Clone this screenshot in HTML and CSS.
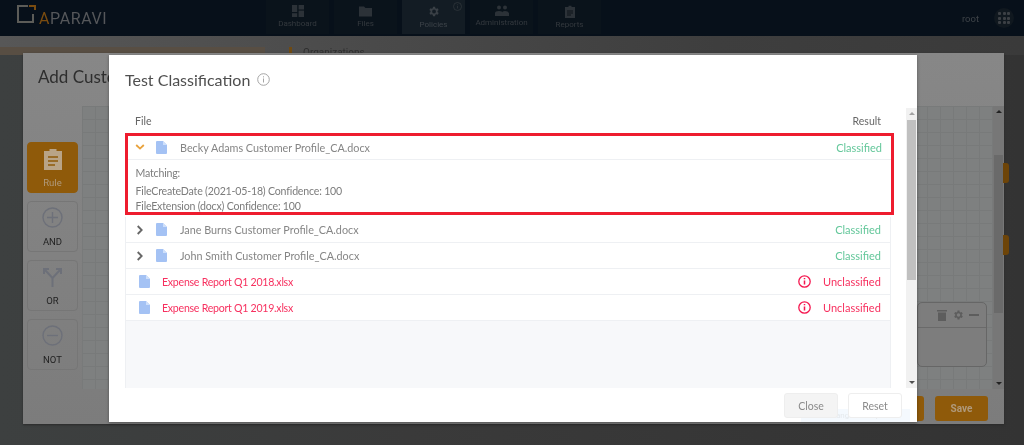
FILE: index.html
```html
<!DOCTYPE html>
<html lang="en">
<head>
<meta charset="utf-8">
<title>Test Classification</title>
<link rel="stylesheet" href="styles.css">
</head>
<body>
<div class="page">
  <header class="topbar">
    <div class="logo">
      <svg class="logo-mark" width="19" height="19" viewBox="0 0 19 19"><path d="M11 1H1v16h15V9" fill="none" stroke="#5c5c58" stroke-width="2"/><path d="M12 1h6v4" fill="none" stroke="#7a4c10" stroke-width="2"/></svg>
      <span class="logo-word"><span class="logo-a">A</span>PARAVI</span>
    </div>
    <nav class="nav">
      <div class="nav-item"><svg width="12" height="12" viewBox="0 0 12 12" fill="#2c3238"><rect width="5.2" height="7"/><rect x="6.6" width="5.4" height="4.5"/><rect y="8.2" width="5.2" height="3.8"/><rect x="6.6" y="5.6" width="5.4" height="6.4"/></svg><span>Dashboard</span></div>
      <div class="nav-item"><svg width="13" height="12" viewBox="0 0 13 12" fill="#2c3238"><path d="M0 1.5h5l1.5 1.5H13v8.500H0z"/></svg><span>Files</span></div>
      <div class="nav-item nav-active"><svg width="13" height="13" viewBox="0 0 24 24" fill="#3a4046"><path d="M19.400 13a7.500 7.500 0 0 0 0-2l2.100-1.600-2-3.500-2.500 1a7.500 7.500 0 0 0-1.700-1L15 3.200h-4l-.4 2.700a7.500 7.500 0 0 0-1.700 1l-2.500-1-2 3.500L6.500 11a7.500 7.500 0 0 0 0 2l-2.100 1.600 2 3.500 2.500-1a7.500 7.500 0 0 0 1.700 1l.4 2.700h4l.4-2.700a7.500 7.500 0 0 0 1.700-1l2.500 1 2-3.500zM13 15.500a3.500 3.500 0 1 1 0-7 3.500 3.500 0 0 1 0 7z"/></svg><span>Policies</span>
        <svg class="nav-info" width="9" height="9" viewBox="0 0 9 9"><circle cx="4.500" cy="4.500" r="4" fill="none" stroke="#30363b" stroke-width=".8"/><path d="M4.500 4v2.500M4.500 2.400v.8" stroke="#30363b" stroke-width=".8"/></svg></div>
      <div class="nav-item"><svg width="14" height="11" viewBox="0 0 14 11" fill="#2c3238"><circle cx="4" cy="2.500" r="2"/><circle cx="10" cy="2.500" r="2"/><path d="M0 11V8q0-2 4-2t3 2q0-2 3-2t4 2v3z"/></svg><span>Administration</span></div>
      <div class="nav-item"><svg width="12" height="13" viewBox="0 0 12 13"><path d="M1 2h3.500V.8h3V2H11v11H1z" fill="#2c3238"/><path d="M3 6h6M3 8h6M3 10h4" stroke="#0c1319"/></svg><span>Reports</span></div>
    </nav>
    <div class="user">
      <span>root</span>
      <div class="apps"><i></i><i></i><i></i><i></i><i></i><i></i><i></i><i></i><i></i></div>
    </div>
  </header>

  <div class="strip">
    <div class="strip-row"></div>
    <div class="org"><span class="pin"></span><span>Organizations</span></div>
  </div>

  <section class="back">
    <h2 class="back-title">Add Custom Rule</h2>
    <div class="back-body">
      <aside class="palette">
        <div class="tool tool-on"><svg width="20" height="22" viewBox="0 0 20 22"><path d="M1 3h5.500V1h7v2H19v19H1z" fill="#b9a487"/><path d="M5 9h10M5 13h10M5 17h7" stroke="#8f5a0a" stroke-width="1.600"/></svg><span>Rule</span></div>
        <div class="tool"><svg width="21" height="21" viewBox="0 0 21 21" fill="none" stroke="#6d7079" stroke-width="1.400"><circle cx="10.500" cy="10.500" r="9.500"/><path d="M10.500 5v11M5 10.500h11"/></svg><span>AND</span></div>
        <div class="tool"><svg width="21" height="21" viewBox="0 0 21 21" fill="none" stroke="#6d7079" stroke-width="2"><path d="M10.500 21v-9L3 4M10.500 12 18 4M2 8V3h5M14 3h5v5"/></svg><span>OR</span></div>
        <div class="tool"><svg width="21" height="21" viewBox="0 0 21 21" fill="none" stroke="#6d7079" stroke-width="1.400"><circle cx="10.500" cy="10.500" r="9.500"/><path d="M5 10.500h11"/></svg><span>NOT</span></div>
      </aside>
      <div class="canvas">
        <div class="node">
          <div class="node-head">
            <svg width="10" height="12" viewBox="0 0 10 12" fill="#5d5d5d"><path d="M0 1h10v1.500H0zM1 3.500h8V12H1z"/></svg>
            <svg width="12" height="12" viewBox="0 0 24 24" fill="#5d5d5d"><path d="M19.400 13a7.500 7.500 0 0 0 0-2l2.100-1.600-2-3.500-2.500 1a7.500 7.500 0 0 0-1.700-1L15 3.200h-4l-.4 2.700a7.500 7.500 0 0 0-1.700 1l-2.500-1-2 3.500L6.500 11a7.500 7.500 0 0 0 0 2l-2.100 1.600 2 3.500 2.500-1a7.500 7.500 0 0 0 1.700 1l.4 2.700h4l.4-2.700a7.500 7.500 0 0 0 1.700-1l2.500 1 2-3.500zM13 15.500a3.500 3.500 0 1 1 0-7 3.500 3.500 0 0 1 0 7z"/></svg>
            <span class="node-min"></span>
          </div>
        </div>
        <div class="canvas-scroll"><b class="arrow-up"></b><span class="canvas-thumb"></span><b class="arrow-down"></b></div>
      </div>
    </div>
    <div class="back-foot">
      <button class="back-btn">Save</button>
      <button class="back-btn">Save</button>
    </div>
    <span class="peek peek-a"></span>
    <span class="peek peek-b"></span>
  </section>

  <div class="modal">
    <h1 class="modal-title">Test Classification
      <svg width="13" height="13" viewBox="0 0 13 13" fill="none" stroke="#a5a5a5"><circle cx="6.500" cy="6.500" r="5.800"/><path d="M6.500 5.500v4M6.500 3.300v1.100"/></svg>
    </h1>
    <div class="modal-scroll">
      <div class="list">
        <div class="list-head"><span>File</span><span>Result</span></div>
        <div class="open-row">
          <div class="row row-plain">
            <svg class="chev" width="10" height="6" viewBox="0 0 10 6" fill="none" stroke="#e9a23b" stroke-width="1.800"><path d="M1.200 1 5 4.600 8.800 1"/></svg>
            <svg class="doc" width="11" height="13" viewBox="0 0 11 13"><path d="M0 1q0-1 1-1h6l4 4v8q0 1-1 1H1q-1 0-1-1z" fill="#a4c2f4"/><path d="M7 0v4h4z" fill="#cfe0fb"/></svg>
            <span class="name">Becky Adams Customer Profile_CA.docx</span>
            <span class="ok">Classified</span>
          </div>
          <div class="detail">
            <p class="match">Matching:</p>
            <p>FileCreateDate (2021-05-18) Confidence: 100</p>
            <p>FileExtension (docx) Confidence: 100</p>
          </div>
        </div>
        <div class="row">
          <svg class="chev" width="7" height="10" viewBox="0 0 7 10" fill="none" stroke="#666" stroke-width="1.800"><path d="M1.200 1 5.200 5l-4 4"/></svg>
          <svg class="doc" width="11" height="13" viewBox="0 0 11 13"><path d="M0 1q0-1 1-1h6l4 4v8q0 1-1 1H1q-1 0-1-1z" fill="#a4c2f4"/><path d="M7 0v4h4z" fill="#cfe0fb"/></svg>
          <span class="name">Jane Burns Customer Profile_CA.docx</span>
          <span class="ok">Classified</span>
        </div>
        <div class="row">
          <svg class="chev" width="7" height="10" viewBox="0 0 7 10" fill="none" stroke="#666" stroke-width="1.800"><path d="M1.200 1 5.200 5l-4 4"/></svg>
          <svg class="doc" width="11" height="13" viewBox="0 0 11 13"><path d="M0 1q0-1 1-1h6l4 4v8q0 1-1 1H1q-1 0-1-1z" fill="#a4c2f4"/><path d="M7 0v4h4z" fill="#cfe0fb"/></svg>
          <span class="name">John Smith Customer Profile_CA.docx</span>
          <span class="ok">Classified</span>
        </div>
        <div class="row row-bad">
          <svg class="doc" width="11" height="13" viewBox="0 0 11 13"><path d="M0 1q0-1 1-1h6l4 4v8q0 1-1 1H1q-1 0-1-1z" fill="#a4c2f4"/><path d="M7 0v4h4z" fill="#cfe0fb"/></svg>
          <span class="name bad">Expense Report Q1 2018.xlsx</span>
          <svg class="warn" width="13" height="13" viewBox="0 0 13 13" fill="none" stroke="#f5174f" stroke-width="1.300"><circle cx="6.500" cy="6.500" r="5.700"/><path d="M6.500 5.600v4M6.500 3v1.300" stroke-width="1.500"/></svg>
          <span class="bad no">Unclassified</span>
        </div>
        <div class="row row-bad">
          <svg class="doc" width="11" height="13" viewBox="0 0 11 13"><path d="M0 1q0-1 1-1h6l4 4v8q0 1-1 1H1q-1 0-1-1z" fill="#a4c2f4"/><path d="M7 0v4h4z" fill="#cfe0fb"/></svg>
          <span class="name bad">Expense Report Q1 2019.xlsx</span>
          <svg class="warn" width="13" height="13" viewBox="0 0 13 13" fill="none" stroke="#f5174f" stroke-width="1.300"><circle cx="6.500" cy="6.500" r="5.700"/><path d="M6.500 5.600v4M6.500 3v1.300" stroke-width="1.500"/></svg>
          <span class="bad no">Unclassified</span>
        </div>
        <div class="list-empty"></div>
      </div>
      <div class="scrollbar"><b class="sb-up"></b><span class="sb-thumb"></span><b class="sb-down"></b></div>
    </div>
    <div class="modal-foot">
      <button class="btn btn-close">Close</button>
      <button class="btn">Reset</button>
    </div>
  </div>
  <div class="snip"><span class="snip-icon"></span>Rectangular Snip</div>
</div>
</body>
</html>
```

FILE: styles.css
```css
* { box-sizing: border-box; }
html, body { margin: 0; height: 100%; overflow: hidden; }
body { background: #3a3a3a; font-family: Lato, "Open Sans", sans-serif; }
p, h1, h2 { margin: 0; font-weight: 400; }

.page {
  position: relative;
  width: 1024px;
  height: 445px;
  overflow: hidden;
  background: linear-gradient(90deg, #3d4040 0, #3a3a3a 40%, #333 100%);
  filter: blur(.45px);
}

/* top bar */
.topbar {
  display: flex;
  align-items: stretch;
  height: 36px;
  background: #07101a;
  font-family: Roboto, sans-serif;
}
.logo { display: flex; align-items: center; width: 266px; padding: 0 0 7px 17px; gap: 3px; }
.logo-word { font-size: 16px; letter-spacing: .6px; color: #55575a; margin-top: 7px; }
.logo-a { color: #7a4c10; }
.nav { display: flex; gap: 5px; }
.nav-item {
  position: relative;
  display: flex;
  flex-direction: column;
  align-items: center;
  gap: 2px;
  width: 63px;
  height: 34px;
  padding-top: 5px;
  background: #0a131b;
  color: #34393e;
  font-size: 8px;
}
.nav-active { background: #131c24; color: #3d4349; }
.nav-info { position: absolute; top: 2px; right: 3px; }
.user { display: flex; align-items: center; gap: 15px; margin-left: auto; padding: 0 10px 0 0; color: #3e4348; font-size: 9.500px; }
.apps {
  display: grid;
  grid-template-columns: repeat(3, 3px);
  gap: 1.500px;
  justify-content: center;
  align-content: center;
  width: 20px;
  height: 20px;
  border-radius: 50%;
  background: #10181f;
}
.apps i { height: 3px; background: #3b3f44; border-radius: 1px; }

/* strip behind the dialogs */
.strip { display: flex; height: 19px; padding-top: 11px; overflow: hidden; background: linear-gradient(90deg, #575757, #3e3e3e 70%, #3a3a3a); }
.strip-row { width: 265px; height: 8px; background: #584e43; }
.org { display: flex; align-items: flex-start; gap: 11px; margin-left: 24px; color: #2e2e2e; font-size: 10px; line-height: 11px; font-family: Roboto, sans-serif; }
.pin { width: 3px; height: 9px; background: #6f4a12; }

/* background dialog */
.back {
  position: absolute;
  left: 23px;
  top: 53px;
  width: 981px;
  height: 371px;
  background: linear-gradient(#878787, #7c7c7c);
  box-shadow: 0 1px 2px #2a2a2a;
}
.back-title { padding: 14px 0 0 15px; color: #2e2e2e; font-size: 17px; line-height: 20px; height: 53px; }
.back-body { display: flex; height: 283px; }
.palette { display: flex; flex-direction: column; gap: 8px; width: 59px; padding: 36px 0 0 4px; }
.tool {
  display: flex;
  flex-direction: column;
  align-items: center;
  justify-content: space-between;
  width: 51px;
  height: 51px;
  padding: 5px 0 4px;
  border: 1px solid #767676;
  border-radius: 4px;
  color: #222;
  font: 9.500px Roboto, sans-serif;
}
.tool-on { background: #8f5a0a; border-color: #8f5a0a; color: #b09a7c; }
.canvas {
  position: relative;
  flex: 1;
  background-color: #7e8080;
  background-image: linear-gradient(#787a7a 1px, transparent 1px), linear-gradient(90deg, #787a7a 1px, transparent 1px);
  background-size: 13px 13px;
}
.node {
  position: absolute;
  left: 835px;
  top: 196px;
  width: 70px;
  height: 65px;
  border: 1px solid #666;
  border-radius: 5px;
  background: #7d7d7d;
}
.node-head { display: flex; align-items: center; justify-content: flex-end; gap: 5px; height: 25px; padding-right: 7px; border-bottom: 1px solid #6a6a6a; }
.node-min { width: 10px; height: 2px; background: #5d5d5d; }
.canvas-scroll { position: absolute; right: 0; top: 0; bottom: 0; width: 11px; background: #777; display: flex; flex-direction: column; align-items: center; justify-content: space-between; padding: 4px 0; }
.canvas-thumb { position: absolute; top: 49px; bottom: 76px; left: 1px; right: 1px; background: #6a6a6a; }
.arrow-up { width: 0; border: 3px solid transparent; border-top: 0; border-bottom: 3px solid #222; }
.arrow-down { width: 0; border: 3px solid transparent; border-bottom: 0; border-top: 3px solid #222; }
.back-foot { display: flex; justify-content: flex-end; gap: 11px; padding: 7px 16px 0 0; }
.back-btn { width: 53px; height: 25px; border: 0; border-radius: 3px; background: #8f5a0a; color: #b09a7c; font: 700 10px Roboto, sans-serif; }
.peek { position: absolute; left: 980px; width: 6px; height: 20px; background: #6d4408; border-radius: 0 3px 3px 0; }
.peek-a { top: 110px; }
.peek-b { top: 182px; }

/* modal */
.modal {
  position: absolute;
  left: 109px;
  top: 55px;
  width: 808px;
  height: 367px;
  background: #fff;
  box-shadow: 0 1px 3px rgba(0,0,0,.35);
  display: flex;
  flex-direction: column;
}
.modal-title {
  display: flex;
  align-items: center;
  gap: 7px;
  height: 53px;
  padding: 0 0 4px 16px;
  color: #4f4f4f;
  font-size: 16px;
}
.modal-scroll { display: flex; height: 280px; }
.list { flex: 1; display: flex; flex-direction: column; padding-left: 16px; min-width: 0; }
.list-head { display: flex; justify-content: space-between; align-items: center; height: 25px; padding: 0 10px; color: #666; font-size: 10.500px; width: 766px; }
.row {
  display: flex;
  align-items: center;
  width: 766px;
  height: 26px;
  padding: 0 9px;
  border: 1px solid #eef0f3;
  border-top: 0;
  color: #858585;
  font-size: 10.800px;
}
.row-plain { height: 24px; padding: 0 9px 1px 7px; border: 0; border-bottom: 1px solid #eef0f3; width: auto; }
.open-row { width: 769px; height: 82px; margin-bottom: 2px; border: 3px solid #ee1c2e; }
.chev { width: 10px; margin-right: 11px; }
.doc { margin-right: 13px; }
.row-bad .doc { margin-left: 4px; margin-right: 12px; }
.name { flex: 1; }
.ok { color: #63c79a; font-size: 11px; }
.bad { color: #f7305f; }
.name.bad { font-size: 10.600px; letter-spacing: -.26px; }
.warn { margin-right: 12px; }
.no { width: 58px; padding-right: 2px; text-align: right; font-size: 11px; }
.detail { padding: 6px 0 0 7.500px; color: #7c7c7c; font-size: 10.600px; letter-spacing: -.19px; line-height: 15px; }
.detail .match { margin-bottom: 3px; }
.list-empty { width: 766px; flex: 1; background: #f7f8fa; border-right: 1px solid #eef0f3; border-left: 1px solid #eef0f3; }
.scrollbar { position: relative; width: 11px; background: #f1f1f1; display: flex; flex-direction: column; justify-content: space-between; align-items: center; padding: 4px 0; }
.sb-thumb { position: absolute; top: 12px; left: 1px; right: 1px; height: 160px; background: #c0c0c0; }
.sb-up { width: 0; border: 3px solid transparent; border-top: 0; border-bottom: 3px solid #a3a3a3; }
.sb-down { width: 0; border: 3px solid transparent; border-bottom: 0; border-top: 3px solid #505050; }
.modal-foot { display: flex; justify-content: flex-end; gap: 10px; padding: 5px 15px 0 0; position: relative; z-index: 2; }
.btn { width: 54px; height: 25px; border: 1px solid #eee; border-radius: 3px; background: #fff; color: #8a8a8a; font: 10.500px Lato, sans-serif; }
.btn-close { background: #f4f4f4; }

.snip {
  position: absolute;
  left: 801px;
  top: 409px;
  width: 109px;
  height: 13px;
  padding-left: 19px;
  background: #f4f9fe;
  color: #e4e8ec;
  font: 8px/13px Roboto, sans-serif;
}
.snip-icon { position: absolute; left: 5px; top: 3px; width: 6px; height: 6px; background: #eadcd6; }
```
